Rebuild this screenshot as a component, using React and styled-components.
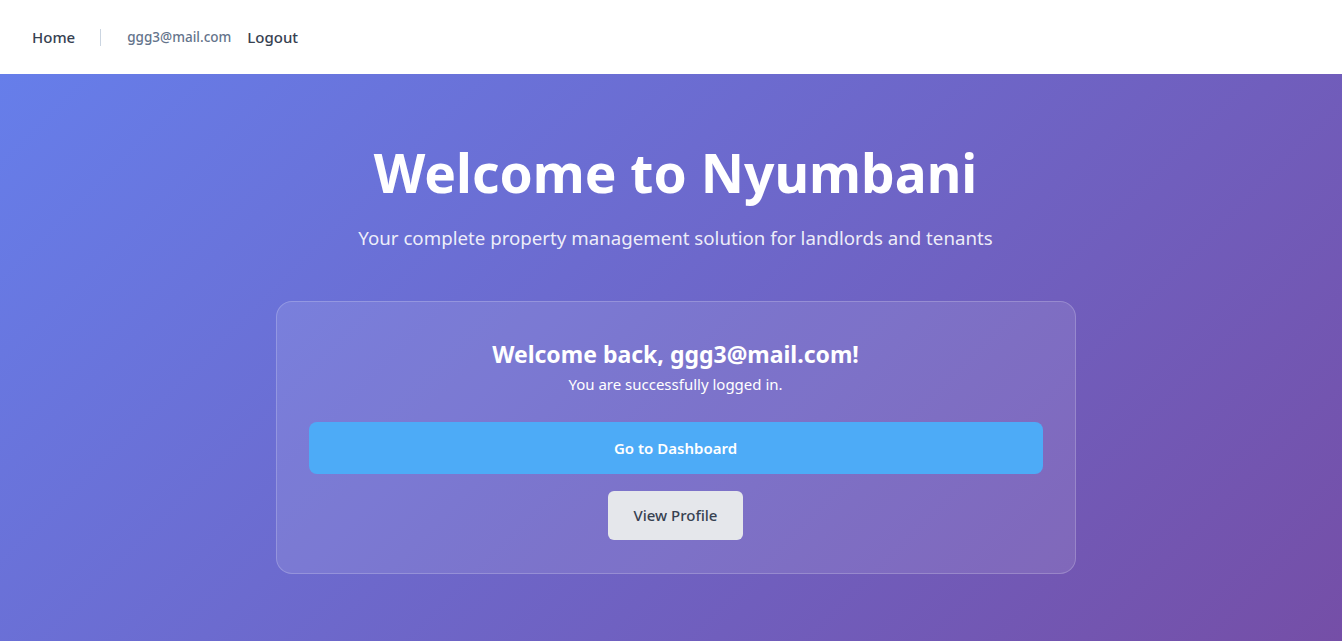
import React from "react";
import styled, { createGlobalStyle } from "styled-components";

const GlobalStyle = createGlobalStyle`
  * {
    box-sizing: border-box;
  }
  body {
    margin: 0;
    font-family: "Noto Sans", "Open Sans", sans-serif;
    background: #ffffff;
  }
`;

const Header = styled.header`
  height: 74px;
  background: #ffffff;
  display: flex;
  align-items: center;
  padding: 0 32px;
`;

const NavLink = styled.a`
  font-size: 15px;
  font-weight: 500;
  color: #374151;
  text-decoration: none;
  cursor: pointer;
`;

const Divider = styled.span`
  width: 1px;
  height: 17px;
  background: #cbd5e1;
  margin: 0 26px 0 25px;
`;

const UserEmail = styled.span`
  font-size: 13.5px;
  font-weight: 500;
  color: #64748b;
  margin-right: 16px;
`;

const Hero = styled.main`
  min-height: 110vh;
  background: linear-gradient(135deg, #667eea 0%, #764ba2 100%);
  display: flex;
  flex-direction: column;
  align-items: center;
  padding: 67px 20px 40px 29px;
  color: #ffffff;
`;

const Title = styled.h1`
  margin: 0;
  font-size: 53.3px;
  font-weight: 700;
  line-height: 1.2;
`;

const Subtitle = styled.p`
  margin: 20px 0 0;
  font-size: 18.7px;
  color: rgba(255, 255, 255, 0.9);
`;

const Card = styled.section`
  width: 800px;
  margin-top: 51px;
  padding: 38px 32px 33px;
  border-radius: 16px;
  background: rgba(255, 255, 255, 0.1);
  border: 1px solid rgba(255, 255, 255, 0.2);
  display: flex;
  flex-direction: column;
  align-items: center;
`;

const CardTitle = styled.h2`
  margin: 0;
  font-size: 23px;
  font-weight: 700;
  line-height: 1.3;
`;

const CardText = styled.p`
  margin: 4px 0 0;
  font-size: 15px;
`;

const Button = styled.button`
  border: none;
  cursor: pointer;
  font-family: inherit;
  font-size: 15px;
  font-weight: ${(p) => (p.$primary ? 600 : 500)};
  color: ${(p) => (p.$primary ? "#ffffff" : "#374151")};
  background: ${(p) => (p.$primary ? "#4dabf7" : "#e5e7eb")};
  border-radius: ${(p) => (p.$primary ? "8px" : "6px")};
  width: ${(p) => (p.$primary ? "100%" : "auto")};
  height: ${(p) => (p.$primary ? "52px" : "49px")};
  padding: 0 25.5px;
  margin-top: ${(p) => (p.$primary ? "28px" : "17px")};
`;

const App = () => {
  const email = "ggg3@mail.com";
  return (
    <>
      <GlobalStyle />
      <Header>
        <NavLink>Home</NavLink>
        <Divider />
        <UserEmail>{email}</UserEmail>
        <NavLink>Logout</NavLink>
      </Header>
      <Hero>
        <Title>Welcome to Nyumbani</Title>
        <Subtitle>
          Your complete property management solution for landlords and tenants
        </Subtitle>
        <Card>
          <CardTitle>Welcome back, {email}!</CardTitle>
          <CardText>You are successfully logged in.</CardText>
          <Button $primary>Go to Dashboard</Button>
          <Button>View Profile</Button>
        </Card>
      </Hero>
    </>
  );
};

export default App;
